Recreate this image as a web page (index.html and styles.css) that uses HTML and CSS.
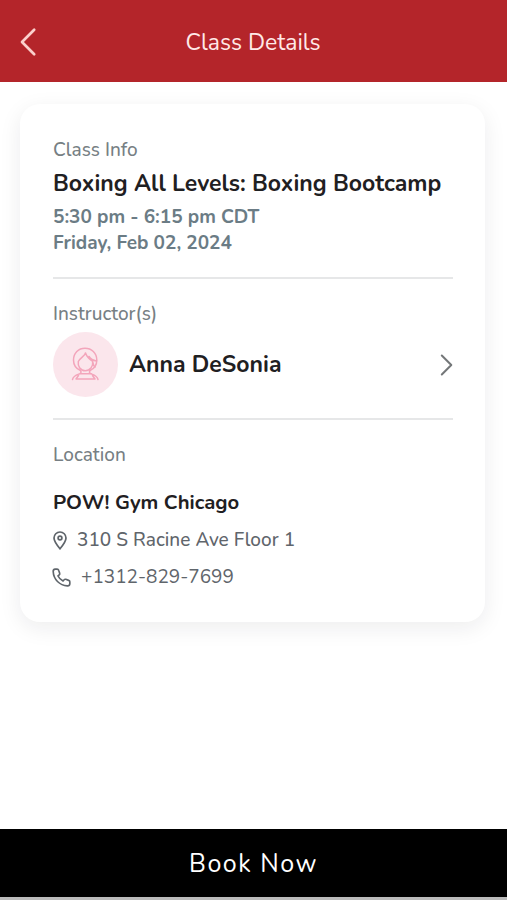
FILE: index.html
```html
<!DOCTYPE html>
<html lang="en">
<head>
<meta charset="utf-8">
<meta name="viewport" content="width=device-width, initial-scale=1">
<title>Class Details</title>
<link rel="stylesheet" href="styles.css">
</head>
<body>
<div class="screen">
  <header class="topbar">
    <svg class="back" viewBox="0 0 18 30" fill="none"><path d="M15.200 2.800 3 15l12.200 12.200"/></svg>
    <h1 class="topbar-title">Class Details</h1>
  </header>
  <main class="content">
    <article class="card">
      <section class="info">
        <h2 class="label">Class Info</h2>
        <p class="class-name">Boxing All Levels: Boxing Bootcamp</p>
        <p class="when">5:30 pm - 6:15 pm CDT<br>Friday, Feb 02, 2024</p>
      </section>
      <section class="instructors">
        <h2 class="label">Instructor(s)</h2>
        <div class="person">
          <svg class="avatar" viewBox="0 0 65 65" fill="none"><circle cx="32.500" cy="32.500" r="32.500"/><path d="M27.500 38.500C22.500 36.500 20.500 32.500 20.500 28 20.500 21 25.500 16.200 32 16.200S43.800 21 43.800 28c0 4.500-2 8.500-6.800 10.500"/><path d="M32.500 21c-.8 3.300-5 4.500-7.200 8.500-.8 5 2.300 9.300 7 9.300s8-4.300 7.400-9.300c-3-2-5.800-4.500-7.200-8.500M36 24.500c1.500 2.500 4 4 7.500 4.500M39.700 30c.5 2.500 1 4 2.300 5"/><path d="M27.500 38.500c1 1.500.5 2.700-.8 3.300-2.700 1-6.200 1.700-7.200 5.700M37 38.500c-1 1.500-.5 2.700.8 3.300 2.700 1 6.200 1.700 7.200 5.700M27 41.800h11.500M25.500 43.500l-2.500 3.500h19l-2.500-3.500"/></svg>
          <span class="person-name">Anna DeSonia</span>
          <svg class="forward" viewBox="0 0 13 22" fill="none"><path d="m1.800 1.500 9.500 9.500-9.500 9.500"/></svg>
        </div>
      </section>
      <section class="location">
        <h2 class="label">Location</h2>
        <p class="gym">POW! Gym Chicago</p>
        <p class="row address"><svg class="pin" viewBox="0 0 14 19" fill="none"><path d="M7 17.800C3.500 13.500 1 10.500 1 7a6 6 0 0 1 12 0c0 3.500-2.500 6.500-6 10.800Z"/><circle cx="7" cy="7" r="1.900"/></svg><span>310 S Racine Ave Floor 1</span></p>
        <p class="row phone"><svg class="handset" viewBox="0 0 24 24" fill="none"><path d="M22.500 17.500v2.500a2.800 2.800 0 0 1-3 2.500C9.500 22 2 14.500 1.500 4.500a2.800 2.800 0 0 1 2.500-3h2.500a2 2 0 0 1 1.900 1.400l1.300 3.700a2 2 0 0 1-.6 2.100L7.600 10.100a14 14 0 0 0 6.300 6.300l1.400-1.500a2 2 0 0 1 2.100-.6l3.700 1.300a2 2 0 0 1 1.400 1.900Z"/></svg><span>+1312-829-7699</span></p>
      </section>
    </article>
  </main>
  <button class="book">Book Now</button>
</div>
</body>
</html>
```
FILE: styles.css
```css
* { box-sizing: border-box; }
body { margin: 0; background: #fff; font-family: Nunito, Lato, "Open Sans", sans-serif; }
h1, h2, p { margin: 0; font-weight: 400; }
.screen { height: 900px; display: flex; flex-direction: column; border-bottom: 3px solid #bbb; }
.topbar { height: 82px; flex: none; background: #b4252a; display: grid; grid-template-columns: 40px 1fr 40px; align-items: center; color: #ffe9e7; }
.back { width: 18px; height: 30px; margin: 1px 0 0 19px; stroke: #fbd0cc; stroke-width: 2.700; stroke-linecap: round; stroke-linejoin: round; }
.topbar-title { text-align: center; font-size: 23px; line-height: 30px; padding: 3px 1px 0 0; }
.content { flex: 1; padding: 22px 22px 0 20px; }
.card { height: 518px; padding: 32px 32px 0 33px; border-radius: 20px; background: #fff; box-shadow: 0 6px 22px rgba(20, 20, 40, .08); }
.label { font-size: 19px; line-height: 26px; font-weight: 500; color: #777f84; }
.info { height: 143px; padding-top: 1px; border-bottom: 2px solid #e6e7e8; }
.class-name { font-size: 23px; line-height: 32px; margin-top: 5px; font-weight: 700; letter-spacing: .02px; color: #1f2022; }
.when { font-size: 19px; line-height: 26px; margin-top: 4px; font-weight: 700; color: #6b7c85; }
.instructors { height: 141px; padding-top: 22px; border-bottom: 2px solid #e6e7e8; }
.person { display: flex; align-items: center; margin-top: 5px; }
.avatar { width: 65px; height: 65px; margin-right: 11px; stroke: #f3a5bb; stroke-width: 1.500; stroke-linecap: round; stroke-linejoin: round; }
.avatar circle { fill: #fbe6ec; stroke: none; }
.person-name { font-size: 23px; font-weight: 700; color: #1f2022; }
.forward { width: 13px; height: 22px; margin-left: auto; stroke: #747779; stroke-width: 2; stroke-linecap: round; stroke-linejoin: round; }
.location { padding-top: 22px; }
.gym { font-size: 20.300px; line-height: 28px; margin-top: 20px; font-weight: 700; color: #1f2022; }
.row { display: flex; align-items: center; color: #5f656b; font-size: 19px; line-height: 27px; }
.row svg { stroke: #5f656b; }
.address { margin-top: 11px; font-weight: 500; letter-spacing: .03px; }
.phone { margin-top: 10px; }
.pin { width: 14px; height: 19px; margin-right: 10px; stroke-width: 1.700; }
.handset { width: 19px; height: 19px; margin: 0 9px 0 -1px; stroke-width: 2.100; }
.phone span { margin-left: 1px; }
.book { height: 68px; flex: none; border: 0; padding: 1px 0 0; background: #000; color: #fff; font-family: inherit; font-size: 25px; letter-spacing: 1.500px; }
```
